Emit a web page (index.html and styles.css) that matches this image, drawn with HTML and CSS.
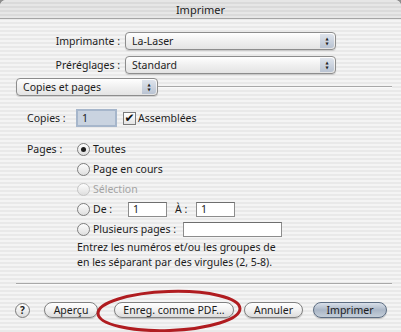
FILE: index.html
```html
<!DOCTYPE html>
<html lang="fr">
<head>
    <meta charset="UTF-8">
    <title>Imprimer</title>
    <link rel="stylesheet" href="styles.css">
</head>
<body>
    <div class="window">
        <div class="titlebar">Imprimer</div>

        <div class="printer-grid">
            <span class="label">Imprimante :</span>
            <div class="popup"><span class="popup-text">La-Laser</span><span class="popup-arrows">&#9650;<br>&#9660;</span></div>
            <span class="label">Préréglages :</span>
            <div class="popup"><span class="popup-text">Standard</span><span class="popup-arrows">&#9650;<br>&#9660;</span></div>
        </div>

        <div class="pane-head">
            <div class="popup pane-popup"><span class="popup-text">Copies et pages</span><span class="popup-arrows">&#9650;<br>&#9660;</span></div>
            <div class="pane-line"></div>
        </div>

        <div class="copies-row">
            <span class="field-label">Copies :</span>
            <div class="field focused">1</div>
            <span class="checkbox">&#10004;</span>
            <span>Assemblées</span>
        </div>

        <div class="pages">
            <span class="field-label">Pages :</span>
            <div class="options">
                <div class="option"><span class="radio on"></span>Toutes</div>
                <div class="option"><span class="radio"></span>Page en cours</div>
                <div class="option disabled"><span class="radio"></span>Sélection</div>
                <div class="option"><span class="radio"></span><span class="de">De :</span><div class="field small">1</div><span class="a">À :</span><div class="field small">1</div></div>
                <div class="option"><span class="radio"></span><span class="multi">Plusieurs pages :</span><div class="field wide"></div></div>
                <p class="hint">Entrez les numéros et/ou les groupes de<br>en les séparant par des virgules (2, 5-8).</p>
            </div>
        </div>

        <div class="separator"></div>

        <div class="footer">
            <span class="help">?</span>
            <span class="btn apercu">Aperçu</span>
            <span class="btn pdf">Enreg. comme PDF...</span>
            <span class="btn annuler">Annuler</span>
            <span class="btn default">Imprimer</span>
        </div>

        <svg class="circle-mark" width="160" height="50" viewBox="0 0 160 50">
            <ellipse cx="80" cy="25" rx="71" ry="19.5" fill="none" stroke="#b01c20" stroke-width="3" transform="rotate(-2 80 25)"/>
        </svg>
    </div>
</body>
</html>
```

FILE: styles.css
```css
html, body {
    margin: 0;
    background-color: #8e8e8e;
}

.window {
    position: relative;
    width: 401px;
    height: 332px;
    overflow: hidden;
    border-radius: 6px 6px 0 0;
    font-family: "Noto Sans", "DejaVu Sans", sans-serif;
    font-size: 10.5px;
    color: #1c1c1c;
    background: repeating-linear-gradient(to bottom, #f4f4f4 0, #f4f4f4 2px, #e9e9e9 2px, #e9e9e9 4px);
}

.titlebar {
    height: 18px;
    line-height: 19px;
    text-align: center;
    font-size: 11px;
    border-bottom: 1px solid #a4a4a4;
    background: repeating-linear-gradient(to bottom, #e6e6e6 0, #e6e6e6 2px, #dadada 2px, #dadada 4px);
}

.printer-grid {
    display: grid;
    grid-template-columns: 120px 211px;
    column-gap: 5px;
    row-gap: 6px;
    margin-top: 13px;
}

.label {
    text-align: right;
    align-self: center;
}

.popup {
    display: flex;
    height: 16px;
    border: 1px solid #8d8d8d;
    border-radius: 4px;
    background: linear-gradient(to bottom, #ffffff, #f0f0f0 50%, #e4e4e4);
    box-shadow: 0 1px 1px rgba(0, 0, 0, 0.15);
}

.popup-text {
    flex: 1;
    padding-left: 6px;
    line-height: 16px;
}

.popup-arrows {
    width: 14px;
    margin: 1px;
    border-radius: 0 3px 3px 0;
    background: linear-gradient(to bottom, #dfe4ec, #b9c3d2);
    font-family: "DejaVu Sans", sans-serif;
    font-size: 4px;
    line-height: 5px;
    text-align: center;
    padding-top: 2px;
    color: #222;
}

.pane-head {
    display: flex;
    align-items: center;
    margin: 4px 9px 0 16px;
}

.pane-popup {
    width: 140px;
}

.pane-line {
    flex: 1;
    border-top: 1px solid #a8a8a8;
    border-bottom: 1px solid #fafafa;
}

.copies-row {
    display: flex;
    align-items: center;
    margin-top: 13px;
    padding-left: 27px;
}

.field-label {
    width: 49px;
}

.field {
    height: 14px;
    line-height: 14px;
    padding-left: 4px;
    border: 1px solid #8c8c8c;
    border-top-color: #6e6e6e;
    background-color: #ffffff;
    box-sizing: content-box;
}

.focused {
    width: 33px;
    border: 2px solid #a6b6cb;
    background-color: #c9d3e0;
}

.checkbox {
    width: 11px;
    height: 11px;
    margin: 0 2px 0 6px;
    border: 1px solid #7b7b7b;
    background: linear-gradient(to bottom, #ffffff, #e4e4e4);
    font-family: "DejaVu Sans", sans-serif;
    font-size: 12px;
    line-height: 10px;
    text-align: center;
    color: #111;
    font-weight: bold;
}

.pages {
    display: flex;
    margin-top: 12px;
    padding-left: 27px;
}

.pages .field-label {
    line-height: 20px;
}

.options {
    margin-left: 1px;
}

.option {
    display: flex;
    align-items: center;
    height: 20px;
}

.disabled {
    color: #a4a4a4;
}

.radio {
    position: relative;
    width: 11px;
    height: 11px;
    margin-right: 3px;
    border: 1px solid #7e7e7e;
    border-radius: 50%;
    background: linear-gradient(to bottom, #fdfdfd, #dedede);
}

.disabled .radio {
    border-color: #c4c4c4;
}

.radio.on::after {
    content: "";
    position: absolute;
    left: 3px;
    top: 3px;
    width: 5px;
    height: 5px;
    border-radius: 50%;
    background-color: #1e1e1e;
}

.de {
    width: 35px;
}

.a {
    width: 21px;
    padding-left: 8px;
}

.small {
    width: 33px;
    height: 13px;
    line-height: 13px;
}

.multi {
    width: 90px;
}

.wide {
    width: 93px;
    height: 13px;
}

.hint {
    margin: 1px 0 0 0;
    line-height: 15px;
}

.separator {
    margin: 13px 9px 0 16px;
    border-top: 1px solid #a8a8a8;
    border-bottom: 1px solid #fafafa;
}

.footer {
    display: flex;
    align-items: center;
    margin-top: 17px;
    padding-left: 15px;
}

.help {
    width: 13px;
    height: 13px;
    margin-right: 14px;
    border: 1px solid #7a7a7a;
    border-radius: 50%;
    background: linear-gradient(to bottom, #ffffff, #dcdcdc);
    text-align: center;
    line-height: 13px;
    font-size: 10px;
    font-weight: bold;
}

.btn {
    height: 14px;
    line-height: 14px;
    text-align: center;
    border: 1px solid #818181;
    border-radius: 8px;
    background: linear-gradient(to bottom, #ffffff, #f1f1f1 50%, #dcdcdc);
    box-shadow: 0 1px 1px rgba(0, 0, 0, 0.2);
}

.apercu {
    width: 52px;
}

.pdf {
    width: 118px;
    margin-left: 16px;
}

.annuler {
    width: 57px;
    margin-left: 10px;
}

.default {
    width: 72px;
    margin-left: 10px;
    border-color: #5d6d82;
    background: linear-gradient(to bottom, #d9e0ea, #aab6c6 50%, #c4ced9);
}

.circle-mark {
    position: absolute;
    left: 89px;
    top: 286px;
}
```
